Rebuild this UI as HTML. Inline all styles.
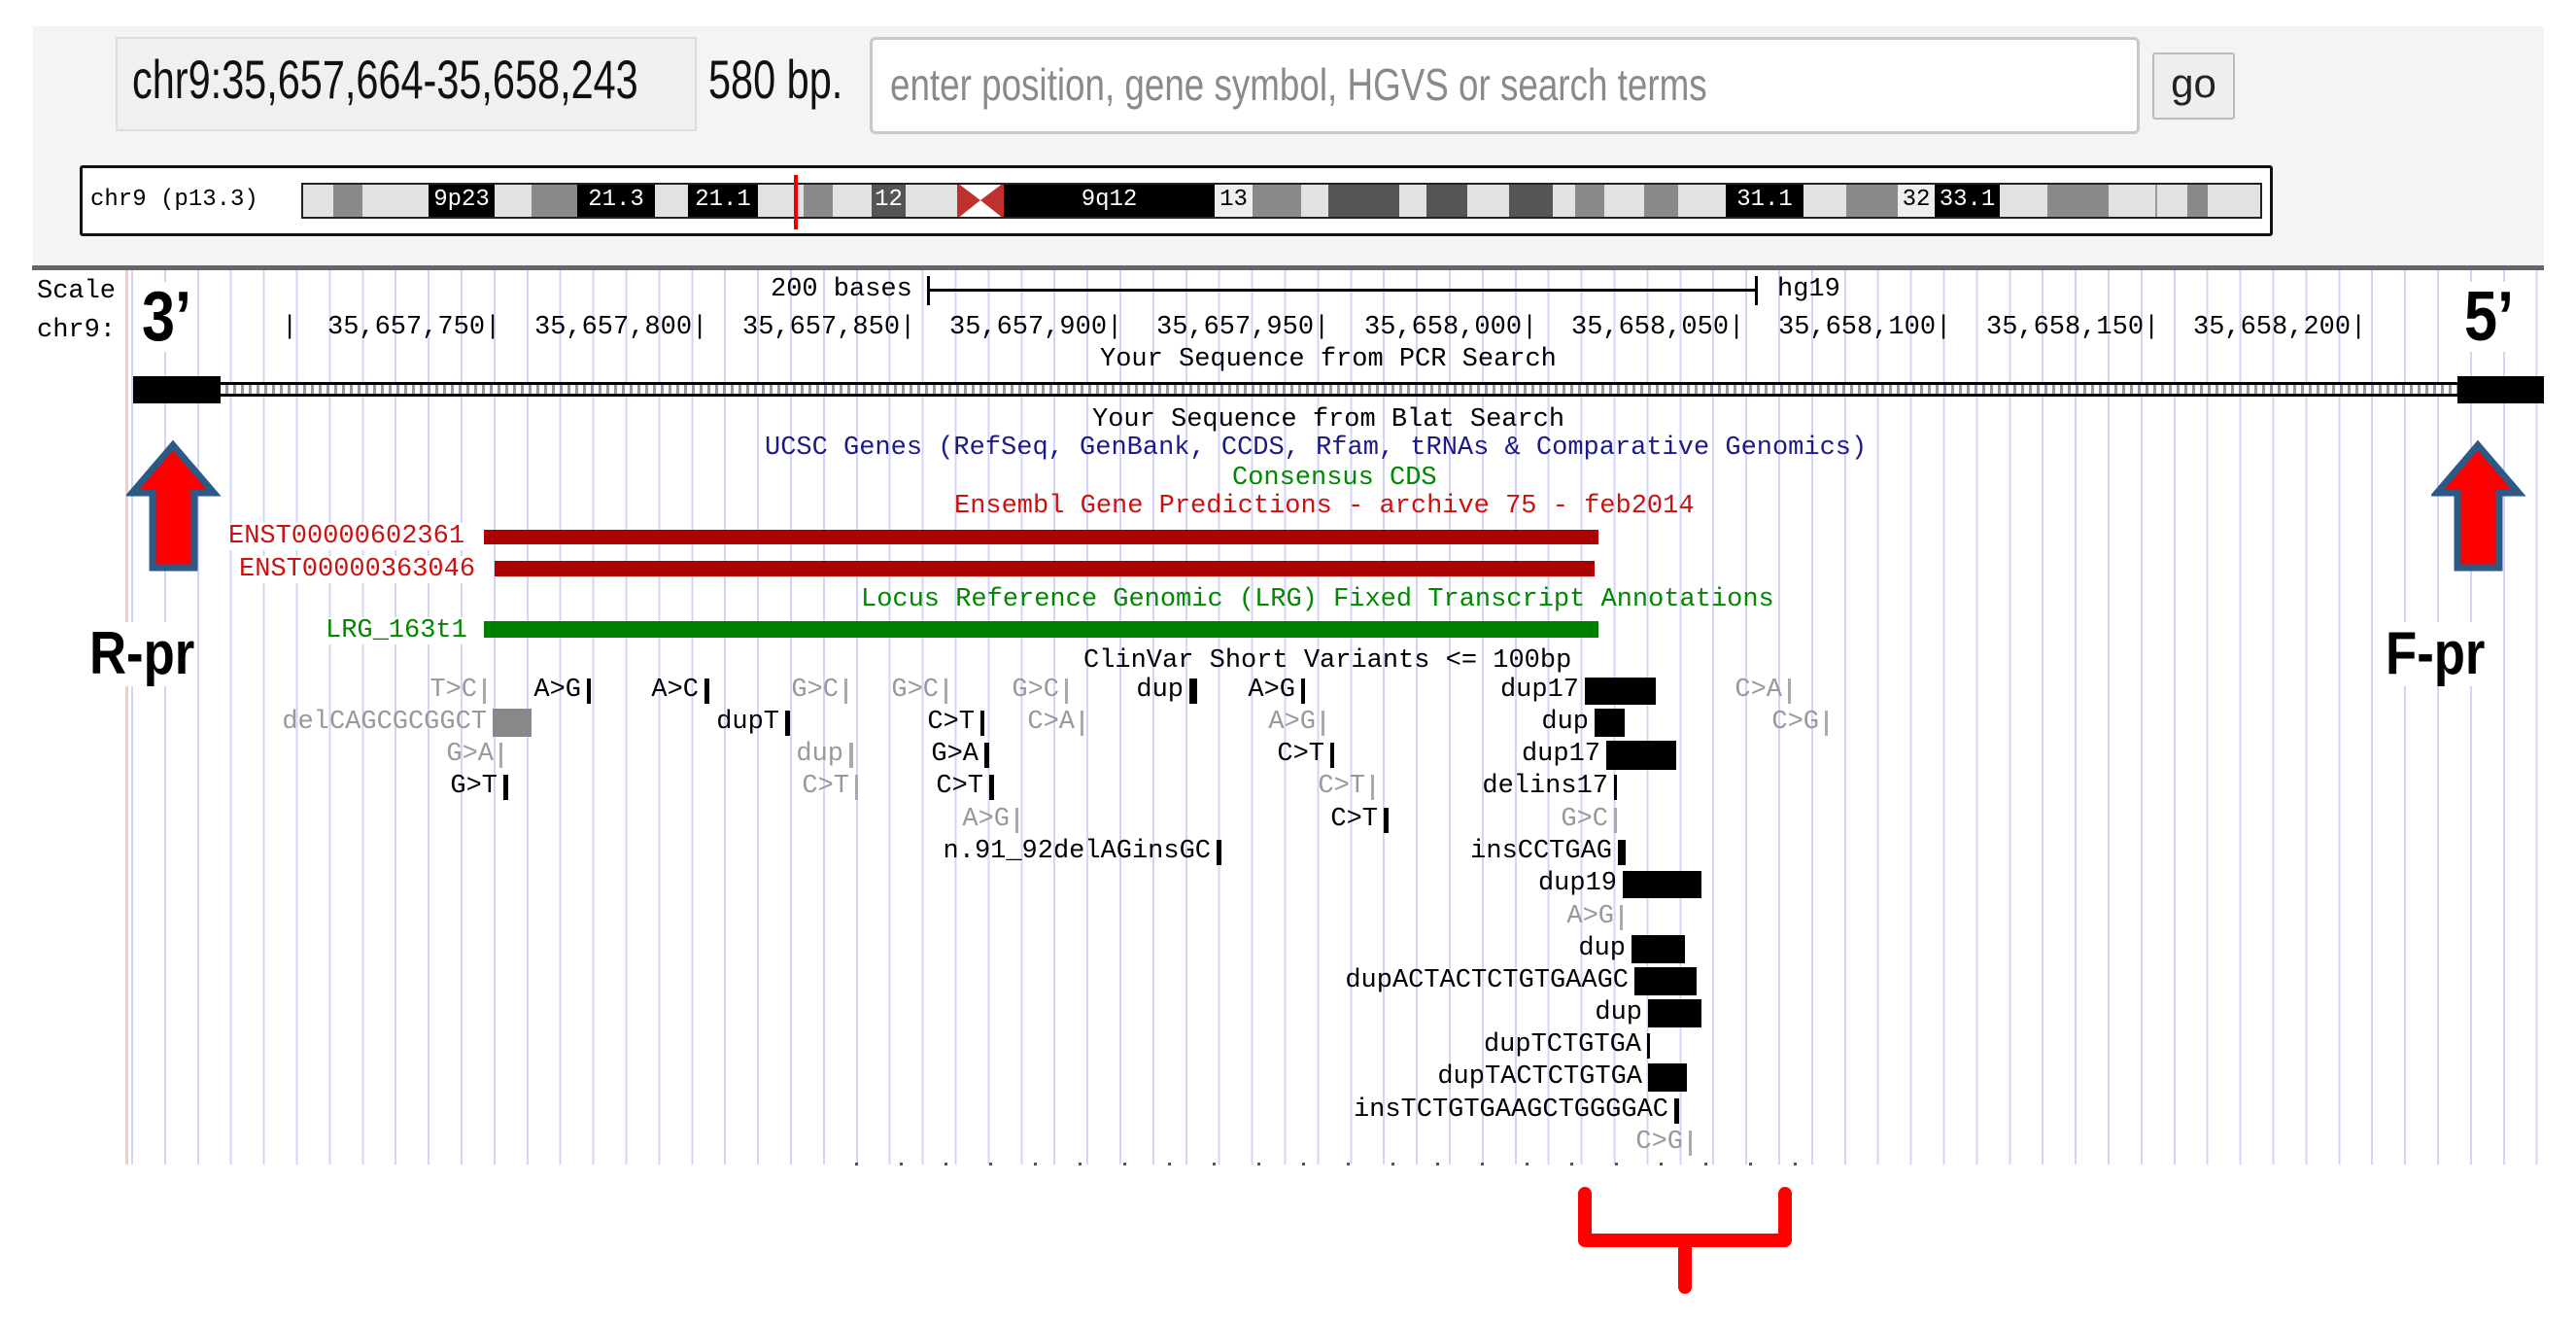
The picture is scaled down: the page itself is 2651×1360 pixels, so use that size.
<!DOCTYPE html>
<html><head><meta charset="utf-8">
<style>
*{margin:0;padding:0;box-sizing:border-box}
body{width:2651px;height:1360px;background:#fff;position:relative;overflow:hidden;font-family:"Liberation Sans",sans-serif}
.a{position:absolute;white-space:nowrap}
.m{position:absolute;white-space:nowrap;font-family:"Liberation Mono",monospace;font-size:27px;line-height:28px;color:#000}
.g{color:#999}
.b{position:absolute;background:#000}
.bg{position:absolute;background:#aaa}
.band{position:absolute;top:0;height:100%}
.L{background:#e2e2e2}.G{background:#8a8a8a}.D{background:#555}.K{background:#000}
.bl{color:#fff;font-family:"Liberation Mono",monospace;font-size:24px;line-height:35px;text-align:center;overflow:hidden}
.r{text-align:right}
</style></head><body>

<!-- top gray panel -->
<div class="a" style="left:34px;top:27px;width:2584px;height:248px;background:#f4f4f4"></div>
<div class="a" style="left:119px;top:38px;width:598px;height:97px;background:#f0f0f0;border:2px solid #ddd"></div>
<div class="a" style="left:136px;top:50px;font-size:56px;line-height:64px;color:#111;transform:scaleX(0.74);transform-origin:0 0">chr9:35,657,664-35,658,243</div>
<div class="a" style="left:729px;top:50px;font-size:56px;line-height:64px;color:#111;transform:scaleX(0.74);transform-origin:0 0">580 bp.</div>
<div class="a" style="left:895px;top:38px;width:1307px;height:100px;background:#fff;border:3px solid #c8c8c8;border-radius:6px"></div>
<div class="a" style="left:916px;top:60px;font-size:46px;line-height:54px;color:#8a8a8a;transform:scaleX(0.8);transform-origin:0 0">enter position, gene symbol, HGVS or search terms</div>
<div class="a" style="left:2215px;top:54px;width:85px;height:69px;background:#eee;border:2px solid #bbb;border-radius:3px;font-size:42px;line-height:60px;text-align:center;color:#222">go</div>

<!-- ideogram -->
<div class="a" style="left:82px;top:170px;width:2257px;height:73px;background:#fff;border:3px solid #111;border-radius:3px"></div>
<div class="m" style="left:93px;top:192px;font-size:24px">chr9 (p13.3)</div>
<div class="a" style="left:310px;top:188px;width:2018px;height:37px;border:2px solid #222;background:#e2e2e2;overflow:hidden">
<div style="position:relative;left:-312px;top:-2px;height:37px;width:2100px">
<div class="band L" style="left:312px;width:31px"></div>
<div class="band G" style="left:343px;width:30px"></div>
<div class="band L" style="left:373px;width:68px"></div>
<div class="band K bl" style="left:441px;width:68px">9p23</div>
<div class="band L" style="left:509px;width:38px"></div>
<div class="band G" style="left:547px;width:47px"></div>
<div class="band K bl" style="left:594px;width:80px">21.3</div>
<div class="band L" style="left:674px;width:34px"></div>
<div class="band K bl" style="left:708px;width:72px">21.1</div>
<div class="band L" style="left:780px;width:47px"></div>
<div class="band G" style="left:827px;width:30px"></div>
<div class="band L" style="left:857px;width:40px"></div>
<div class="band D bl" style="left:897px;width:35px">12</div>
<div class="band L" style="left:932px;width:53px"></div>
<div class="band" style="left:985px;width:48px;background:#fff"><svg width="48" height="37"><polygon points="0,0 24,18 0,37" fill="#c0302c"/><polygon points="48,0 24,18 48,37" fill="#c0302c"/></svg></div>
<div class="band K bl" style="left:1033px;width:217px">9q12</div>
<div class="band bl" style="left:1250px;width:39px;background:#eee;color:#000">13</div>
<div class="band G" style="left:1289px;width:50px"></div>
<div class="band L" style="left:1339px;width:28px"></div>
<div class="band D" style="left:1367px;width:73px"></div>
<div class="band L" style="left:1440px;width:28px"></div>
<div class="band D" style="left:1468px;width:42px"></div>
<div class="band L" style="left:1510px;width:43px"></div>
<div class="band D" style="left:1553px;width:45px"></div>
<div class="band L" style="left:1598px;width:23px"></div>
<div class="band G" style="left:1621px;width:30px"></div>
<div class="band L" style="left:1651px;width:41px"></div>
<div class="band G" style="left:1692px;width:35px"></div>
<div class="band L" style="left:1727px;width:49px"></div>
<div class="band K bl" style="left:1776px;width:80px">31.1</div>
<div class="band L" style="left:1856px;width:44px"></div>
<div class="band G" style="left:1900px;width:53px"></div>
<div class="band bl" style="left:1953px;width:38px;background:#eee;color:#000">32</div>
<div class="band K bl" style="left:1991px;width:67px">33.1</div>
<div class="band L" style="left:2058px;width:49px"></div>
<div class="band G" style="left:2107px;width:63px"></div>
<div class="band L" style="left:2170px;width:48px"></div>
<div class="band" style="left:2218px;width:2px;background:#999"></div>
<div class="band L" style="left:2220px;width:31px"></div>
<div class="band G" style="left:2251px;width:21px"></div>
<div class="band L" style="left:2272px;width:60px"></div>
</div></div>
<div class="a" style="left:817px;top:180px;width:4px;height:56px;background:#e00"></div>

<!-- separator -->
<div class="a" style="left:33px;top:273px;width:2585px;height:5px;background:#666"></div>

<!-- grid lines -->
<div class="a" style="left:135px;top:278px;width:2483px;height:920px;background:repeating-linear-gradient(90deg,#d4d4fb 0px,#d4d4fb 2px,transparent 2px,transparent 33.9px)"></div>
<div class="a" style="left:129px;top:278px;width:3px;height:920px;background:#ffc8c8"></div>

<!-- scale -->
<div class="m" style="left:38px;top:286px;background:#fff">Scale</div>
<div class="m" style="left:38px;top:326px;background:#fff">chr9:</div>
<div class="a" style="left:146px;top:290px;font-size:72px;line-height:72px;font-weight:bold;transform:scaleX(0.85);transform-origin:0 0;background:#fff">3’</div>
<div class="a" style="left:2536px;top:290px;font-size:72px;line-height:72px;font-weight:bold;transform:scaleX(0.85);transform-origin:0 0;background:#fff">5’</div>
<div class="m" style="left:793px;top:284px">200 bases</div>
<div class="a" style="left:954px;top:284px;width:3px;height:30px;background:#000"></div>
<div class="a" style="left:954px;top:297px;width:854px;height:3px;background:#000"></div>
<div class="a" style="left:1806px;top:284px;width:3px;height:30px;background:#000"></div>
<div class="m" style="left:1829px;top:284px">hg19</div>
<div class="m" style="left:290px;top:323px">|</div>
<div class="m" style="left:337px;top:323px">35,657,750|</div>
<div class="m" style="left:550px;top:323px">35,657,800|</div>
<div class="m" style="left:764px;top:323px">35,657,850|</div>
<div class="m" style="left:977px;top:323px">35,657,900|</div>
<div class="m" style="left:1190px;top:323px">35,657,950|</div>
<div class="m" style="left:1404px;top:323px">35,658,000|</div>
<div class="m" style="left:1617px;top:323px">35,658,050|</div>
<div class="m" style="left:1830px;top:323px">35,658,100|</div>
<div class="m" style="left:2044px;top:323px">35,658,150|</div>
<div class="m" style="left:2257px;top:323px">35,658,200|</div>
<div class="m" style="left:1132px;top:356px">Your Sequence from PCR Search</div>

<!-- PCR bar -->
<div class="a" style="left:137px;top:387px;width:90px;height:28px;background:#000"></div>
<div class="a" style="left:227px;top:393px;width:2302px;height:15px;border-top:3px solid #000;border-bottom:3px solid #000;background:repeating-linear-gradient(90deg,#fff 0,#fff 5px,#999 5px,#999 8px)"></div>
<div class="a" style="left:2529px;top:387px;width:89px;height:28px;background:#000"></div>

<div class="m" style="left:1124px;top:418px">Your Sequence from Blat Search</div>
<div class="m" style="left:787px;top:447px;color:#1a1a8a">UCSC Genes (RefSeq, GenBank, CCDS, Rfam, tRNAs &amp; Comparative Genomics)</div>
<div class="m" style="left:1268px;top:478px;color:#008800">Consensus CDS</div>
<div class="m" style="left:982px;top:507px;color:#cc1111">Ensembl Gene Predictions - archive 75 - feb2014</div>
<div class="m" style="left:235px;top:538px;color:#cc1111;background:#fff">ENST00000602361</div>
<div class="a" style="left:498px;top:545px;width:1147px;height:15px;background:#aa0000"></div>
<div class="m" style="left:246px;top:572px;color:#cc1111;background:#fff">ENST00000363046</div>
<div class="a" style="left:509px;top:577px;width:1132px;height:16px;background:#aa0000"></div>
<div class="m" style="left:886px;top:603px;color:#008800">Locus Reference Genomic (LRG) Fixed Transcript Annotations</div>
<div class="m" style="left:335px;top:635px;color:#008800;background:#fff">LRG_163t1</div>
<div class="a" style="left:498px;top:639px;width:1147px;height:17px;background:#008000"></div>
<div class="m" style="left:1115px;top:666px">ClinVar Short Variants &lt;= 100bp</div>

<!-- arrows -->
<svg class="a" style="left:130px;top:452px" width="100" height="140"><polygon points="48,6 90,55 70,55 70,132 27,132 27,55 6,55" fill="#ff0000" stroke="#2a5a85" stroke-width="7" stroke-linejoin="miter"/></svg>
<svg class="a" style="left:2502px;top:452px" width="100" height="140"><polygon points="48,6 90,55 70,55 70,132 27,132 27,55 6,55" fill="#ff0000" stroke="#2a5a85" stroke-width="7" stroke-linejoin="miter"/></svg>
<div class="a" style="left:92px;top:640px;font-size:62px;line-height:66px;font-weight:bold;background:#fff;transform:scaleX(0.85);transform-origin:0 0">R-pr</div>
<div class="a" style="left:2455px;top:640px;font-size:62px;line-height:66px;font-weight:bold;background:#fff;transform:scaleX(0.85);transform-origin:0 0">F-pr</div>

<!-- row0 -->
<div class="m g r" style="right:2160px;top:696px">T&gt;C</div><div class="bg" style="left:497px;top:698px;width:3px;height:26px"></div>
<div class="m r" style="right:2053px;top:696px">A&gt;G</div><div class="b" style="left:604px;top:698px;width:4px;height:26px"></div>
<div class="m r" style="right:1932px;top:696px">A&gt;C</div><div class="b" style="left:725px;top:698px;width:5px;height:26px"></div>
<div class="m g r" style="right:1788px;top:696px">G&gt;C</div><div class="bg" style="left:869px;top:698px;width:3px;height:26px"></div>
<div class="m g r" style="right:1685px;top:696px">G&gt;C</div><div class="bg" style="left:972px;top:698px;width:3px;height:26px"></div>
<div class="m g r" style="right:1561px;top:696px">G&gt;C</div><div class="bg" style="left:1096px;top:698px;width:3px;height:26px"></div>
<div class="m r" style="right:1433px;top:696px">dup</div><div class="b" style="left:1224px;top:698px;width:8px;height:26px"></div>
<div class="m r" style="right:1318px;top:696px">A&gt;G</div><div class="b" style="left:1339px;top:698px;width:4px;height:26px"></div>
<div class="m r" style="right:1026px;top:696px">dup17</div><div class="b" style="left:1631px;top:697px;width:73px;height:28px"></div>
<div class="m g r" style="right:817px;top:696px">C&gt;A</div><div class="bg" style="left:1840px;top:698px;width:3px;height:26px"></div>
<!-- row1 -->
<div class="m g r" style="right:2150px;top:729px">delCAGCGCGGCT</div><div class="a" style="left:507px;top:729px;width:40px;height:29px;background:#888"></div>
<div class="m r" style="right:1849px;top:729px">dupT</div><div class="b" style="left:808px;top:731px;width:5px;height:26px"></div>
<div class="m r" style="right:1648px;top:729px">C&gt;T</div><div class="b" style="left:1009px;top:731px;width:4px;height:26px"></div>
<div class="m g r" style="right:1545px;top:729px">C&gt;A</div><div class="bg" style="left:1112px;top:731px;width:3px;height:26px"></div>
<div class="m g r" style="right:1297px;top:729px">A&gt;G</div><div class="bg" style="left:1360px;top:731px;width:3px;height:26px"></div>
<div class="m r" style="right:1016px;top:729px">dup</div><div class="b" style="left:1641px;top:729px;width:31px;height:29px"></div>
<div class="m g r" style="right:779px;top:729px">C&gt;G</div><div class="bg" style="left:1878px;top:731px;width:3px;height:26px"></div>
<!-- row2 -->
<div class="m g r" style="right:2143px;top:762px">G&gt;A</div><div class="bg" style="left:514px;top:764px;width:3px;height:26px"></div>
<div class="m g r" style="right:1783px;top:762px">dup</div><div class="bg" style="left:874px;top:764px;width:4px;height:26px"></div>
<div class="m r" style="right:1644px;top:762px">G&gt;A</div><div class="b" style="left:1013px;top:764px;width:5px;height:26px"></div>
<div class="m r" style="right:1288px;top:762px">C&gt;T</div><div class="b" style="left:1369px;top:764px;width:4px;height:26px"></div>
<div class="m r" style="right:1004px;top:762px">dup17</div><div class="b" style="left:1653px;top:762px;width:72px;height:30px"></div>
<!-- row3 -->
<div class="m r" style="right:2139px;top:795px">G&gt;T</div><div class="b" style="left:518px;top:797px;width:5px;height:26px"></div>
<div class="m g r" style="right:1777px;top:795px">C&gt;T</div><div class="bg" style="left:880px;top:797px;width:3px;height:26px"></div>
<div class="m r" style="right:1639px;top:795px">C&gt;T</div><div class="b" style="left:1018px;top:797px;width:5px;height:26px"></div>
<div class="m g r" style="right:1246px;top:795px">C&gt;T</div><div class="bg" style="left:1411px;top:797px;width:3px;height:26px"></div>
<div class="m r" style="right:996px;top:795px">delins17</div><div class="b" style="left:1661px;top:797px;width:3px;height:26px"></div>
<!-- row4 -->
<div class="m g r" style="right:1612px;top:829px">A&gt;G</div><div class="bg" style="left:1045px;top:831px;width:3px;height:26px"></div>
<div class="m r" style="right:1233px;top:829px">C&gt;T</div><div class="b" style="left:1424px;top:831px;width:5px;height:26px"></div>
<div class="m g r" style="right:996px;top:829px">G&gt;C</div><div class="bg" style="left:1661px;top:831px;width:3px;height:26px"></div>
<!-- row5 -->
<div class="m r" style="right:1405px;top:862px">n.91_92delAGinsGC</div><div class="b" style="left:1252px;top:864px;width:5px;height:26px"></div>
<div class="m r" style="right:992px;top:862px">insCCTGAG</div><div class="b" style="left:1665px;top:864px;width:8px;height:26px"></div>
<!-- row6 -->
<div class="m r" style="right:987px;top:895px">dup19</div><div class="b" style="left:1670px;top:896px;width:81px;height:28px"></div>
<!-- row7 -->
<div class="m g r" style="right:990px;top:929px">A&gt;G</div><div class="bg" style="left:1667px;top:931px;width:3px;height:26px"></div>
<!-- row8 -->
<div class="m r" style="right:978px;top:962px">dup</div><div class="b" style="left:1679px;top:962px;width:55px;height:29px"></div>
<!-- row9 -->
<div class="m r" style="right:975px;top:995px">dupACTACTCTGTGAAGC</div><div class="b" style="left:1682px;top:995px;width:64px;height:29px"></div>
<!-- row10 -->
<div class="m r" style="right:961px;top:1028px">dup</div><div class="b" style="left:1696px;top:1028px;width:55px;height:29px"></div>
<!-- row11 -->
<div class="m r" style="right:962px;top:1061px">dupTCTGTGA</div><div class="b" style="left:1695px;top:1063px;width:3px;height:26px"></div>
<!-- row12 -->
<div class="m r" style="right:961px;top:1094px">dupTACTCTGTGA</div><div class="b" style="left:1696px;top:1094px;width:40px;height:29px"></div>
<!-- row13 -->
<div class="m r" style="right:934px;top:1128px">insTCTGTGAAGCTGGGGAC</div><div class="b" style="left:1723px;top:1130px;width:5px;height:26px"></div>
<!-- row14 -->
<div class="m g r" style="right:919px;top:1161px">C&gt;G</div><div class="bg" style="left:1738px;top:1163px;width:3px;height:26px"></div>

<!-- bottom dotted marks -->
<div class="a" style="left:880px;top:1196px;width:1000px;height:3px;background:repeating-linear-gradient(90deg,#555 0,#555 3px,transparent 3px,transparent 46px)"></div>

<!-- red bracket -->
<svg class="a" style="left:1615px;top:1220px" width="245" height="120"><path d="M16,8 L16,56 L222,56 L222,8 M119,56 L119,104" fill="none" stroke="#ff0000" stroke-width="14" stroke-linecap="round" stroke-linejoin="round"/></svg>
</body></html>
